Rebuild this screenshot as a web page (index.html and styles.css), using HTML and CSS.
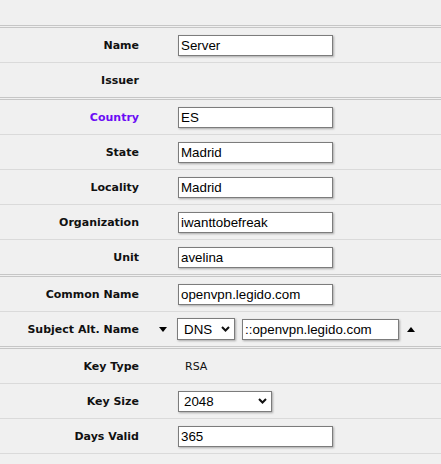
FILE: index.html
```html
<!DOCTYPE html>
<html>
<head>
<meta charset="utf-8">
<link rel="stylesheet" href="styles.css">
</head>
<body>
<div class="form">
  <div class="group">
    <div class="row"><label class="lbl">Name</label><span class="slot"></span><div class="val"><input class="txt" type="text" value="Server"></div></div>
    <div class="row"><label class="lbl">Issuer</label><span class="slot"></span><div class="val"></div></div>
  </div>
  <div class="group">
    <div class="row"><label class="lbl lbl-req">Country</label><span class="slot"></span><div class="val"><input class="txt" type="text" value="ES"></div></div>
    <div class="row"><label class="lbl">State</label><span class="slot"></span><div class="val"><input class="txt" type="text" value="Madrid"></div></div>
    <div class="row"><label class="lbl">Locality</label><span class="slot"></span><div class="val"><input class="txt" type="text" value="Madrid"></div></div>
    <div class="row"><label class="lbl">Organization</label><span class="slot"></span><div class="val"><input class="txt" type="text" value="iwanttobefreak"></div></div>
    <div class="row"><label class="lbl">Unit</label><span class="slot"></span><div class="val"><input class="txt" type="text" value="avelina"></div></div>
  </div>
  <div class="group">
    <div class="row"><label class="lbl">Common Name</label><span class="slot"></span><div class="val"><input class="txt" type="text" value="openvpn.legido.com"></div></div>
    <div class="row"><label class="lbl">Subject Alt. Name</label>
      <span class="slot"><span class="tri tri-down"></span></span>
      <div class="val">
        <span class="sel sel-dns"><select><option>DNS</option></select><svg class="chev" width="9" height="6" viewBox="0 0 9 6"><path d="M1 1 L4.5 4.5 L8 1" fill="none" stroke="#111" stroke-width="2"/></svg></span>
        <input class="txt txt-san" type="text" value="::openvpn.legido.com">
        <span class="tri tri-up"></span>
      </div>
    </div>
  </div>
  <div class="group">
    <div class="row"><label class="lbl">Key Type</label><span class="slot"></span><div class="val"><span class="static">RSA</span></div></div>
    <div class="row"><label class="lbl">Key Size</label><span class="slot"></span><div class="val"><span class="sel sel-size"><select><option>2048</option></select><svg class="chev" width="9" height="6" viewBox="0 0 9 6"><path d="M1 1 L4.5 4.5 L8 1" fill="none" stroke="#111" stroke-width="2"/></svg></span></div></div>
    <div class="row"><label class="lbl">Days Valid</label><span class="slot"></span><div class="val"><input class="txt" type="text" value="365"></div></div>
  </div>
</div>
</body>
</html>
```
FILE: styles.css
```css
html, body {
  margin: 0;
  padding: 0;
  background: #f0f0f0;
}
body {
  padding-top: 25px;
  font-family: "DejaVu Sans", Verdana, sans-serif;
}
.group {
  border-top: 3px double #c6c6c6;
}
.group:last-child {
  border-bottom: 1px solid #dadada;
}
.row {
  display: grid;
  grid-template-columns: 139px 39px 1fr;
  column-gap: 0;
  align-items: center;
  height: 34px;
}
.row + .row {
  border-top: 1px solid #dadada;
}
.lbl {
  text-align: right;
  font-weight: bold;
  font-size: 11px;
  color: #111;
}
.lbl-req {
  color: #6b0cf5;
}
.slot {
  display: flex;
  align-items: center;
  justify-content: flex-start;
  padding-left: 20px;
}
.val {
  display: flex;
  align-items: center;
  gap: 7px;
}
.txt {
  box-sizing: border-box;
  width: 155px;
  height: 21px;
  margin: 0;
  padding: 0 2px;
  border: 1px solid #7c7c7c;
  background: #fff;
  box-shadow: 1px 1px 2px rgba(0,0,0,0.3);
  font-family: "Liberation Sans", Arial, sans-serif;
  font-size: 13.333px;
  color: #000;
  outline: none;
}
.txt-san {
  width: 157px;
}
.sel {
  position: relative;
  display: inline-block;
  margin-left: -1px;
}
.sel select {
  appearance: none;
  -webkit-appearance: none;
  box-sizing: border-box;
  height: 22px;
  margin: 0;
  padding: 0 0 0 6px;
  border: 1px solid #7c7c7c;
  border-radius: 0;
  background: #fff;
  box-shadow: 1px 1px 2px rgba(0,0,0,0.3);
  font-family: "Liberation Sans", Arial, sans-serif;
  font-size: 13.333px;
  color: #000;
  outline: none;
}
.sel-dns select { width: 58px; }
.sel-size { margin-left: 0; }
.sel-size select { width: 94px; padding-left: 5px; height: 21px; }
.chev {
  position: absolute;
  right: 5px;
  top: 50%;
  margin-top: -3px;
  pointer-events: none;
}
.tri {
  display: inline-block;
  width: 0;
  height: 0;
  border-left: 4px solid transparent;
  border-right: 4px solid transparent;
}
.tri-down {
  border-top: 5px solid #000;
}
.tri-up {
  border-bottom: 5px solid #000;
  margin-left: 1px;
}
.static {
  padding-left: 7px;
  font-family: "DejaVu Sans", Verdana, sans-serif;
  font-size: 11px;
  color: #111;
}
```
